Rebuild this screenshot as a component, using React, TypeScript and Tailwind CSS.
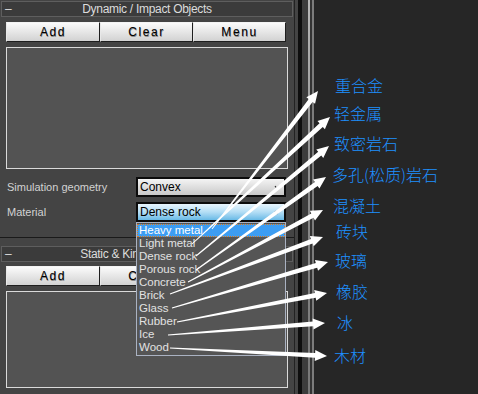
import React from "react";

type Pt = [number, number];

const ARROWS: { from: Pt; to: Pt }[] = [
  { from: [212, 229], to: [318, 91] },
  { from: [192, 244], to: [330, 117] },
  { from: [196, 256], to: [329, 146] },
  { from: [196, 270], to: [326, 177] },
  { from: [188, 282], to: [323, 210] },
  { from: [170, 294], to: [323, 237] },
  { from: [172, 308], to: [328, 262] },
  { from: [177, 322], to: [327, 293] },
  { from: [168, 335], to: [325, 323] },
  { from: [170, 348], to: [327, 356] },
];

const LABELS = [
  { text: "重合金", cls: "mt-[75px] ml-[21px]" },
  { text: "轻金属", cls: "mt-[8px] ml-[20px]" },
  { text: "致密岩石", cls: "mt-[10px] ml-[20px]" },
  { text: "多孔(松质)岩石", cls: "mt-[11px] ml-[18px]" },
  { text: "混凝土", cls: "mt-[11px] ml-[19px]" },
  { text: "砖块", cls: "mt-[6px] ml-[22px]" },
  { text: "玻璃", cls: "mt-[9px] ml-[21px]" },
  { text: "橡胶", cls: "mt-[11px] ml-[22px]" },
  { text: "冰", cls: "mt-[11px] ml-[23px]" },
  { text: "木材", cls: "mt-[13px] ml-[20px]" },
];

const MATERIALS = [
  "Heavy metal",
  "Light metal",
  "Dense rock",
  "Porous rock",
  "Concrete",
  "Brick",
  "Glass",
  "Rubber",
  "Ice",
  "Wood",
];

function arrowPoints(from: Pt, to: Pt) {
  const dx = to[0] - from[0];
  const dy = to[1] - from[1];
  const len = Math.hypot(dx, dy);
  const ux = dx / len;
  const uy = dy / len;
  const nx = -uy;
  const ny = ux;
  const headLen = 12;
  const bx = to[0] - ux * headLen;
  const by = to[1] - uy * headLen;
  const p = (x: number, y: number, w: number) => `${x + nx * w},${y + ny * w}`;
  return [
    p(from[0], from[1], 0.5),
    p(bx, by, 2.4),
    p(bx, by, 5.5),
    `${to[0]},${to[1]}`,
    p(bx, by, -5.5),
    p(bx, by, -2.4),
    p(from[0], from[1], -0.5),
  ].join(" ");
}

function RolloutHeader({ title }: { title: string }) {
  return (
    <div className="mx-[1px] flex h-[16px] items-center border border-[#5e5e5e] bg-[#3b3b3b] text-[12px] leading-none tracking-[-0.3px] text-[#dcdcdc]">
      <span className="w-[12px] pl-[3px]">–</span>
      <span className="flex-1 text-center">{title}</span>
      <span className="w-[12px]" />
    </div>
  );
}

function ButtonRow() {
  return (
    <div className="mx-[6px] grid h-[20px] grid-cols-[94px_93px_93px]">
      {["Add", "Clear", "Menu"].map((b) => (
        <button
          key={b}
          type="button"
          className="flex items-center justify-center border border-t-[#f4f4f4] border-l-[#e8e8e8] border-r-[#1e1e1e] border-b-[#1e1e1e] bg-gradient-to-b from-[#fbfbfb] to-[#d2d2d2] text-[12px] tracking-[1.6px] text-black [text-shadow:0.5px_1px_0_#8a8a8a]"
        >
          {b}
        </button>
      ))}
    </div>
  );
}

function Chevron() {
  return (
    <svg width="6" height="5" viewBox="0 0 6 5" className="shrink-0">
      <path d="M1 1 L3 3.5 L5 1" stroke="#222" strokeWidth="1.2" fill="none" />
    </svg>
  );
}

export default function App() {
  return (
    <div className="relative flex h-[394px] w-[478px] overflow-hidden bg-[#262626] font-['Liberation_Sans',sans-serif]">
      {/* command panel */}
      <div className="flex w-[294px] flex-col bg-[#444444] pt-[1px]">
        <RolloutHeader title="Dynamic / Impact Objects" />
        <div className="mt-[5px]">
          <ButtonRow />
        </div>
        <div className="mx-[6px] mt-[5px] h-[122px] border border-[#dadada] bg-[#535353]" />

        <div className="mt-[8px] flex h-[20px] items-center">
          <span className="w-[136px] pl-[7px] text-[11px] text-[#d2d2d2]">Simulation geometry</span>
          <div className="flex h-[20px] w-[150px] items-center justify-between border-2 border-[#0c0c0c] bg-gradient-to-b from-[#f4f4f4] to-[#c9c9c9] pl-[2px] pr-[4px] text-[12px] text-black">
            <span>Convex</span>
            <Chevron />
          </div>
        </div>

        <div className="relative mt-[5px] flex h-[20px] items-center">
          <span className="w-[136px] pl-[7px] text-[11px] text-[#d2d2d2]">Material</span>
          <div className="flex h-[20px] w-[150px] items-center justify-between border-2 border-[#0c0c0c] bg-gradient-to-b from-[#e8f5fd] via-[#b4def5] to-[#68bae6] pl-[2px] pr-[4px] text-[12px] text-black">
            <span>Dense rock</span>
            <Chevron />
          </div>
          <div className="absolute left-[136px] top-[20px] z-10 flex h-[134px] w-[150px] flex-col border border-[#aab2c2] bg-[#555555] py-[1px]">
            {MATERIALS.map((m, i) => (
              <div
                key={m}
                className={
                  i === 0
                    ? "flex h-[13px] items-center border border-dotted border-[#e07a1a] bg-[#3d9df2] pl-[1px] text-[11.5px] leading-none text-white"
                    : "flex h-[13px] items-center pl-[2px] text-[11.5px] leading-none text-[#e2e2e2]"
                }
              >
                {m}
              </div>
            ))}
          </div>
        </div>

        <div className="mt-[15px] h-[1px] bg-[#1a1a1a]" />
        <div className="mt-[8px]">
          <RolloutHeader title="Static & Kinematic Objects" />
        </div>
        <div className="mt-[4px]">
          <ButtonRow />
        </div>
        <div className="mx-[6px] mt-[5px] h-[97px] border border-[#dadada] bg-[#535353]" />
      </div>

      {/* scroll strip */}
      <div className="flex">
        <div className="w-[1px] bg-[#222222]" />
        <div className="w-[3px] bg-[#444444]" />
        <div className="w-[4px] bg-[#0e0e0e]" />
        <div className="w-[6px] bg-[#3c3c3c]" />
        <div className="w-[2px] bg-gradient-to-b from-[#b8b8b8] via-[#8a8a8a] to-[#777777]" />
        <div className="w-[2px] bg-[#333333]" />
        <div className="w-[2px] bg-[#7c7c7c]" />
      </div>

      {/* annotation labels */}
      <div className="flex flex-1 flex-col font-['Noto_Sans_CJK_SC',sans-serif] text-[16px] font-light leading-[20px] text-[#1e90ff]">
        {LABELS.map((l) => (
          <span key={l.text} className={`h-[20px] whitespace-nowrap ${l.cls}`}>
            {l.text}
          </span>
        ))}
      </div>

      {/* annotation arrows */}
      <svg
        className="pointer-events-none absolute inset-0 z-20"
        width="478"
        height="394"
        viewBox="0 0 478 394"
      >
        {ARROWS.map((a, i) => (
          <polygon key={i} points={arrowPoints(a.from, a.to)} fill="#ffffff" />
        ))}
      </svg>
    </div>
  );
}
